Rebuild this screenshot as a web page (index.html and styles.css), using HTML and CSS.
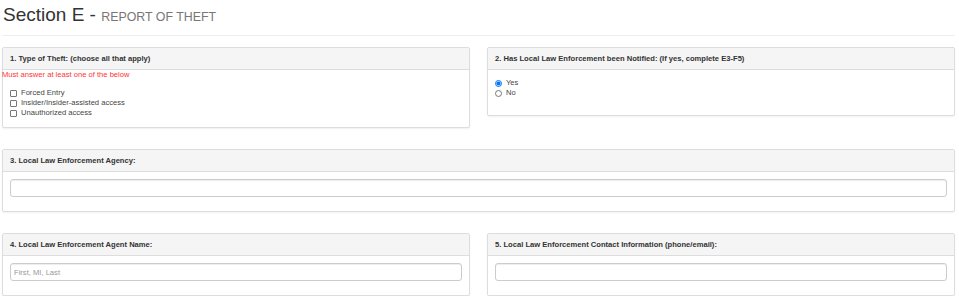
FILE: index.html
```html
<!DOCTYPE html>
<html lang="en">
<head>
    <meta charset="UTF-8">
    <meta name="viewport" content="width=device-width, initial-scale=1.0">
    <title>Section E - Report of Theft</title>
    <link rel="stylesheet" href="styles.css">
</head>
<body>
    <h1 class="section-title">Section E - <small>REPORT OF THEFT</small></h1>
    <hr class="divider">

    <form class="section-grid">
        <div class="panel">
            <div class="panel-heading">1. Type of Theft: (choose all that apply)</div>
            <div class="panel-body checks-body">
                <div class="required">Must answer at least one of the below</div>
                <label class="option"><input type="checkbox" name="theft_type" value="forced"> Forced Entry</label>
                <label class="option"><input type="checkbox" name="theft_type" value="insider"> Insider/Insider-assisted access</label>
                <label class="option"><input type="checkbox" name="theft_type" value="unauthorized"> Unauthorized access</label>
            </div>
        </div>

        <div class="panel">
            <div class="panel-heading">2. Has Local Law Enforcement been Notified: (If yes, complete E3-F5)</div>
            <div class="panel-body radios-body">
                <label class="option"><input type="radio" name="notified" value="yes" checked> Yes</label>
                <label class="option"><input type="radio" name="notified" value="no"> No</label>
            </div>
        </div>

        <div class="panel wide">
            <div class="panel-heading">3. Local Law Enforcement Agency:</div>
            <div class="panel-body field-body">
                <input type="text" class="form-control" name="agency">
            </div>
        </div>

        <div class="panel">
            <div class="panel-heading">4. Local Law Enforcement Agent Name:</div>
            <div class="panel-body field-body">
                <input type="text" class="form-control" name="agent_name" placeholder="First, MI, Last">
            </div>
        </div>

        <div class="panel">
            <div class="panel-heading">5. Local Law Enforcement Contact Information (phone/email):</div>
            <div class="panel-body field-body">
                <input type="text" class="form-control" name="agent_contact">
            </div>
        </div>
    </form>
</body>
</html>
```
FILE: styles.css
```css
body {
    margin: 0;
    font-family: 'Liberation Sans', Arial, sans-serif;
    font-size: 7.6px;
    color: #333;
    background-color: #fff;
}

.section-title {
    margin: 0;
    padding: 3px 0 0 3px;
    height: 24px;
    font-size: 19px;
    font-weight: normal;
    line-height: 24px;
    color: #333;
}

.section-title small {
    font-size: 12.4px;
    line-height: 1;
    color: #777;
}

.divider {
    margin: 8px 4px 0 2px;
    border: 0;
    border-top: 1px solid #eee;
}

.section-grid {
    display: grid;
    grid-template-columns: 1fr 1fr;
    column-gap: 17px;
    row-gap: 21px;
    align-items: start;
    width: 953px;
    margin: 11px 0 0 2px;
}

.panel {
    border: 1px solid #ddd;
    border-radius: 2px;
    background-color: #fff;
    box-shadow: 0 1px 2px rgba(0, 0, 0, 0.06);
}

.panel.wide {
    grid-column: 1 / 3;
}

.panel-heading {
    padding: 0 7px;
    line-height: 21px;
    font-weight: bold;
    background-color: #f5f5f5;
    border-bottom: 1px solid #ddd;
}

.panel-body {
    padding: 0 7px;
}

.checks-body {
    padding-bottom: 9px;
}

.radios-body {
    padding-top: 8px;
    padding-bottom: 17px;
}

.field-body {
    padding-top: 7px;
    padding-bottom: 14px;
}

.required {
    margin: 0 -8px 9px;
    line-height: 9px;
    color: #f33;
}

.option {
    display: flex;
    align-items: center;
    line-height: 10px;
    color: #444;
}

.option input {
    width: 7px;
    height: 7px;
    margin: 0 4px 0 0;
}

.option input[type="checkbox"] {
    appearance: none;
    box-sizing: border-box;
    border: 1px solid #767676;
    border-radius: 1px;
    background-color: #fff;
}

.form-control {
    display: block;
    box-sizing: border-box;
    width: 100%;
    height: 18px;
    margin: 0;
    padding: 0 3px;
    font-family: inherit;
    font-size: 7.6px;
    color: #555;
    border: 1px solid #ccc;
    border-radius: 3px;
    box-shadow: inset 0 1px 1px rgba(0, 0, 0, 0.075);
}

.form-control::placeholder {
    color: #999;
}
```
